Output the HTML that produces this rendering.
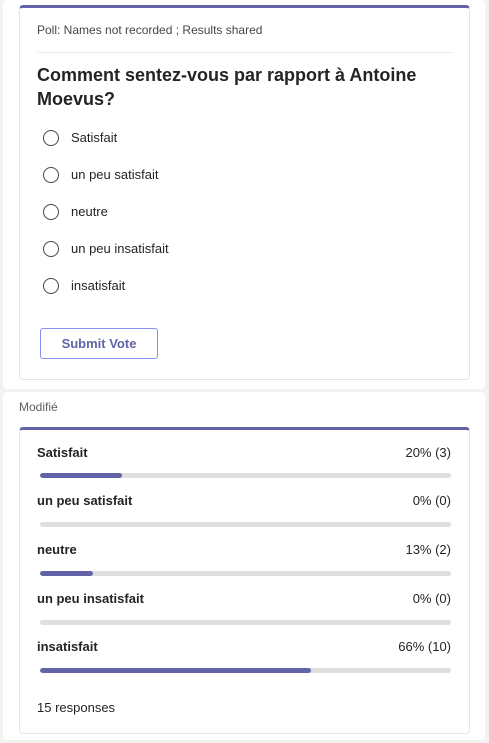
<!DOCTYPE html>
<html><head><style>
body{margin:0;width:489px;height:743px;background:#f3f2f1;font-family:"Liberation Sans",sans-serif;color:#252423;position:relative;overflow:hidden}
.panel{position:absolute;left:3px;width:482px;background:#fff;border-radius:4px}
.card{position:absolute;left:19px;width:451px;background:#fff;border:1px solid #e6e6e6;border-top:3px solid #6264a7;border-radius:4px;box-sizing:border-box}
.abs{position:absolute}
.radio{position:absolute;left:23px;width:14px;height:14px;border:1.5px solid #484644;border-radius:50%}
.opt{position:absolute;left:51px;font-size:13px}
.lbl{position:absolute;left:17px;font-size:13px;font-weight:bold}
.pct{position:absolute;right:18px;font-size:13px}
.bar{position:absolute;left:20px;width:411px;height:5px;background:#e1dfdd;border-radius:3px;overflow:hidden}
.bar i{display:block;height:5px;background:#6264a7;border-radius:3px}
</style></head><body>
<div class="panel" style="top:0;height:389px"></div>
<div class="panel" style="top:392px;height:348px"></div>
<div class="card" style="top:5px;height:375px">
 <div class="abs" style="left:17px;top:15px;font-size:12px;color:#484644">Poll: Names not recorded ; Results shared</div>
 <div class="abs" style="left:17px;top:44px;width:416px;border-top:1px solid #edebe9"></div>
 <div class="abs" style="left:17px;top:55px;font-size:18px;font-weight:bold;line-height:24px;color:#252423">Comment sentez-vous par rapport à Antoine Moevus?</div>
 <div class="radio" style="top:122px"></div><div class="opt" style="top:122px">Satisfait</div>
 <div class="radio" style="top:159px"></div><div class="opt" style="top:159px">un peu satisfait</div>
 <div class="radio" style="top:196px"></div><div class="opt" style="top:196px">neutre</div>
 <div class="radio" style="top:233px"></div><div class="opt" style="top:233px">un peu insatisfait</div>
 <div class="radio" style="top:270px"></div><div class="opt" style="top:270px">insatisfait</div>
 <div class="abs" style="left:20px;top:320px;width:118px;height:31px;border:1px solid #8b8cf0;border-radius:3px;box-sizing:border-box;text-align:center;line-height:29px;font-size:13px;font-weight:bold;color:#6264a7">Submit Vote</div>
</div>
<div class="abs" style="left:19px;top:400px;font-size:12px;color:#605e5c">Modifié</div>
<div class="card" style="top:427px;height:307px">
 <div class="lbl" style="top:15px">Satisfait</div><div class="pct" style="top:15px">20% (3)</div>
 <div class="bar" style="top:43px"><i style="width:20%"></i></div>
 <div class="lbl" style="top:63px">un peu satisfait</div><div class="pct" style="top:63px">0% (0)</div>
 <div class="bar" style="top:92px"></div>
 <div class="lbl" style="top:112px">neutre</div><div class="pct" style="top:112px">13% (2)</div>
 <div class="bar" style="top:141px"><i style="width:13%"></i></div>
 <div class="lbl" style="top:161px">un peu insatisfait</div><div class="pct" style="top:161px">0% (0)</div>
 <div class="bar" style="top:190px"></div>
 <div class="lbl" style="top:209px">insatisfait</div><div class="pct" style="top:209px">66% (10)</div>
 <div class="bar" style="top:238px"><i style="width:66%"></i></div>
 <div class="abs" style="left:17px;top:270px;font-size:13px">15 responses</div>
</div>
</body></html>
